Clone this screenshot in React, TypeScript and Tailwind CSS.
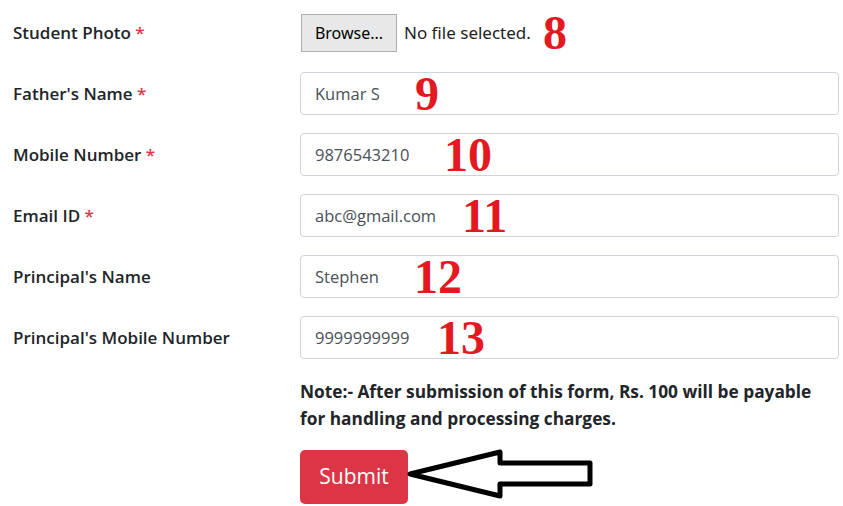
const fields = [
  { label: "Father's Name", required: true, value: 'Kumar S', num: '9', left: 'left-[115px]' },
  { label: 'Mobile Number', required: true, value: '9876543210', num: '10', left: 'left-[144px]' },
  { label: 'Email ID', required: true, value: 'abc@gmail.com', num: '11', left: 'left-[162px]' },
  { label: "Principal's Name", required: false, value: 'Stephen', num: '12', left: 'left-[114px]' },
  { label: "Principal's Mobile Number", required: false, value: '9999999999', num: '13', left: 'left-[137px]' },
];

const Marker = ({ n, className }: { n: string; className: string }) => (
  <span
    className={`absolute top-1/2 -translate-y-1/2 text-[48px] leading-none font-bold text-[#e3191f] ${className}`}
    style={{ fontFamily: '"Liberation Serif", serif' }}
  >
    {n}
  </span>
);

const App = () => {
  return (
    <div
      className="w-[843px] h-[506px] bg-white text-[#212529] overflow-hidden"
      style={{ fontFamily: '"Open Sans", "Noto Sans", sans-serif' }}
    >
      <form className="flex flex-col pt-[11px] pr-[4px]">
        {/* file upload */}
        <div className="flex items-center h-[43px]">
          <label className="w-[300px] pl-[13px] text-[17px] font-semibold">
            Student Photo <span className="text-[#dc3545]">*</span>
          </label>
          <div className="relative flex items-center flex-1">
            <button
              type="button"
              className="h-[38px] w-[96px] ml-[1px] border border-[#adadad] bg-[#e8e8e8] text-[16px] text-black"
              style={{ fontFamily: '"Noto Sans", sans-serif' }}
            >
              Browse...
            </button>
            <span className="ml-[7px] text-[17px] text-[#222]" style={{ fontFamily: '"Noto Sans", sans-serif' }}>
              No file selected.
            </span>
            <Marker n="8" className="left-[243px]" />
          </div>
        </div>

        {fields.map((f) => (
          <div key={f.label} className="flex items-center h-[43px] mt-[18px]">
            <label className="w-[300px] pl-[13px] text-[17px] font-semibold">
              {f.label} {f.required && <span className="text-[#dc3545]">*</span>}
            </label>
            <div className="relative flex-1 h-full">
              <input
                readOnly
                value={f.value}
                className="w-full h-full px-[14px] border border-[#ced4da] rounded-[4px] text-[16.5px] text-[#495057] outline-none"
              />
              <Marker n={f.num} className={f.left} />
            </div>
          </div>
        ))}

        <div className="pl-[300px] mt-[19px]">
          <p className="text-[17.3px] leading-[27px] font-bold w-[540px]">
            Note:- After submission of this form, Rs. 100 will be payable for handling and processing charges.
          </p>
          <div className="relative mt-[18px] h-[54px]">
            <button
              type="button"
              className="h-[54px] w-[108px] rounded-[5px] bg-[#dc3545] text-white text-[21px]"
            >
              Submit
            </button>
            <svg className="absolute left-[106px] top-[-2px]" width="190" height="52" viewBox="406 448 190 52">
              <polygon
                points="410,474 500,452 500,463 590,463 590,484 500,484 500,496"
                fill="white"
                stroke="black"
                strokeWidth="5"
                strokeLinejoin="round"
              />
            </svg>
          </div>
        </div>
      </form>
    </div>
  );
};

export default App;
